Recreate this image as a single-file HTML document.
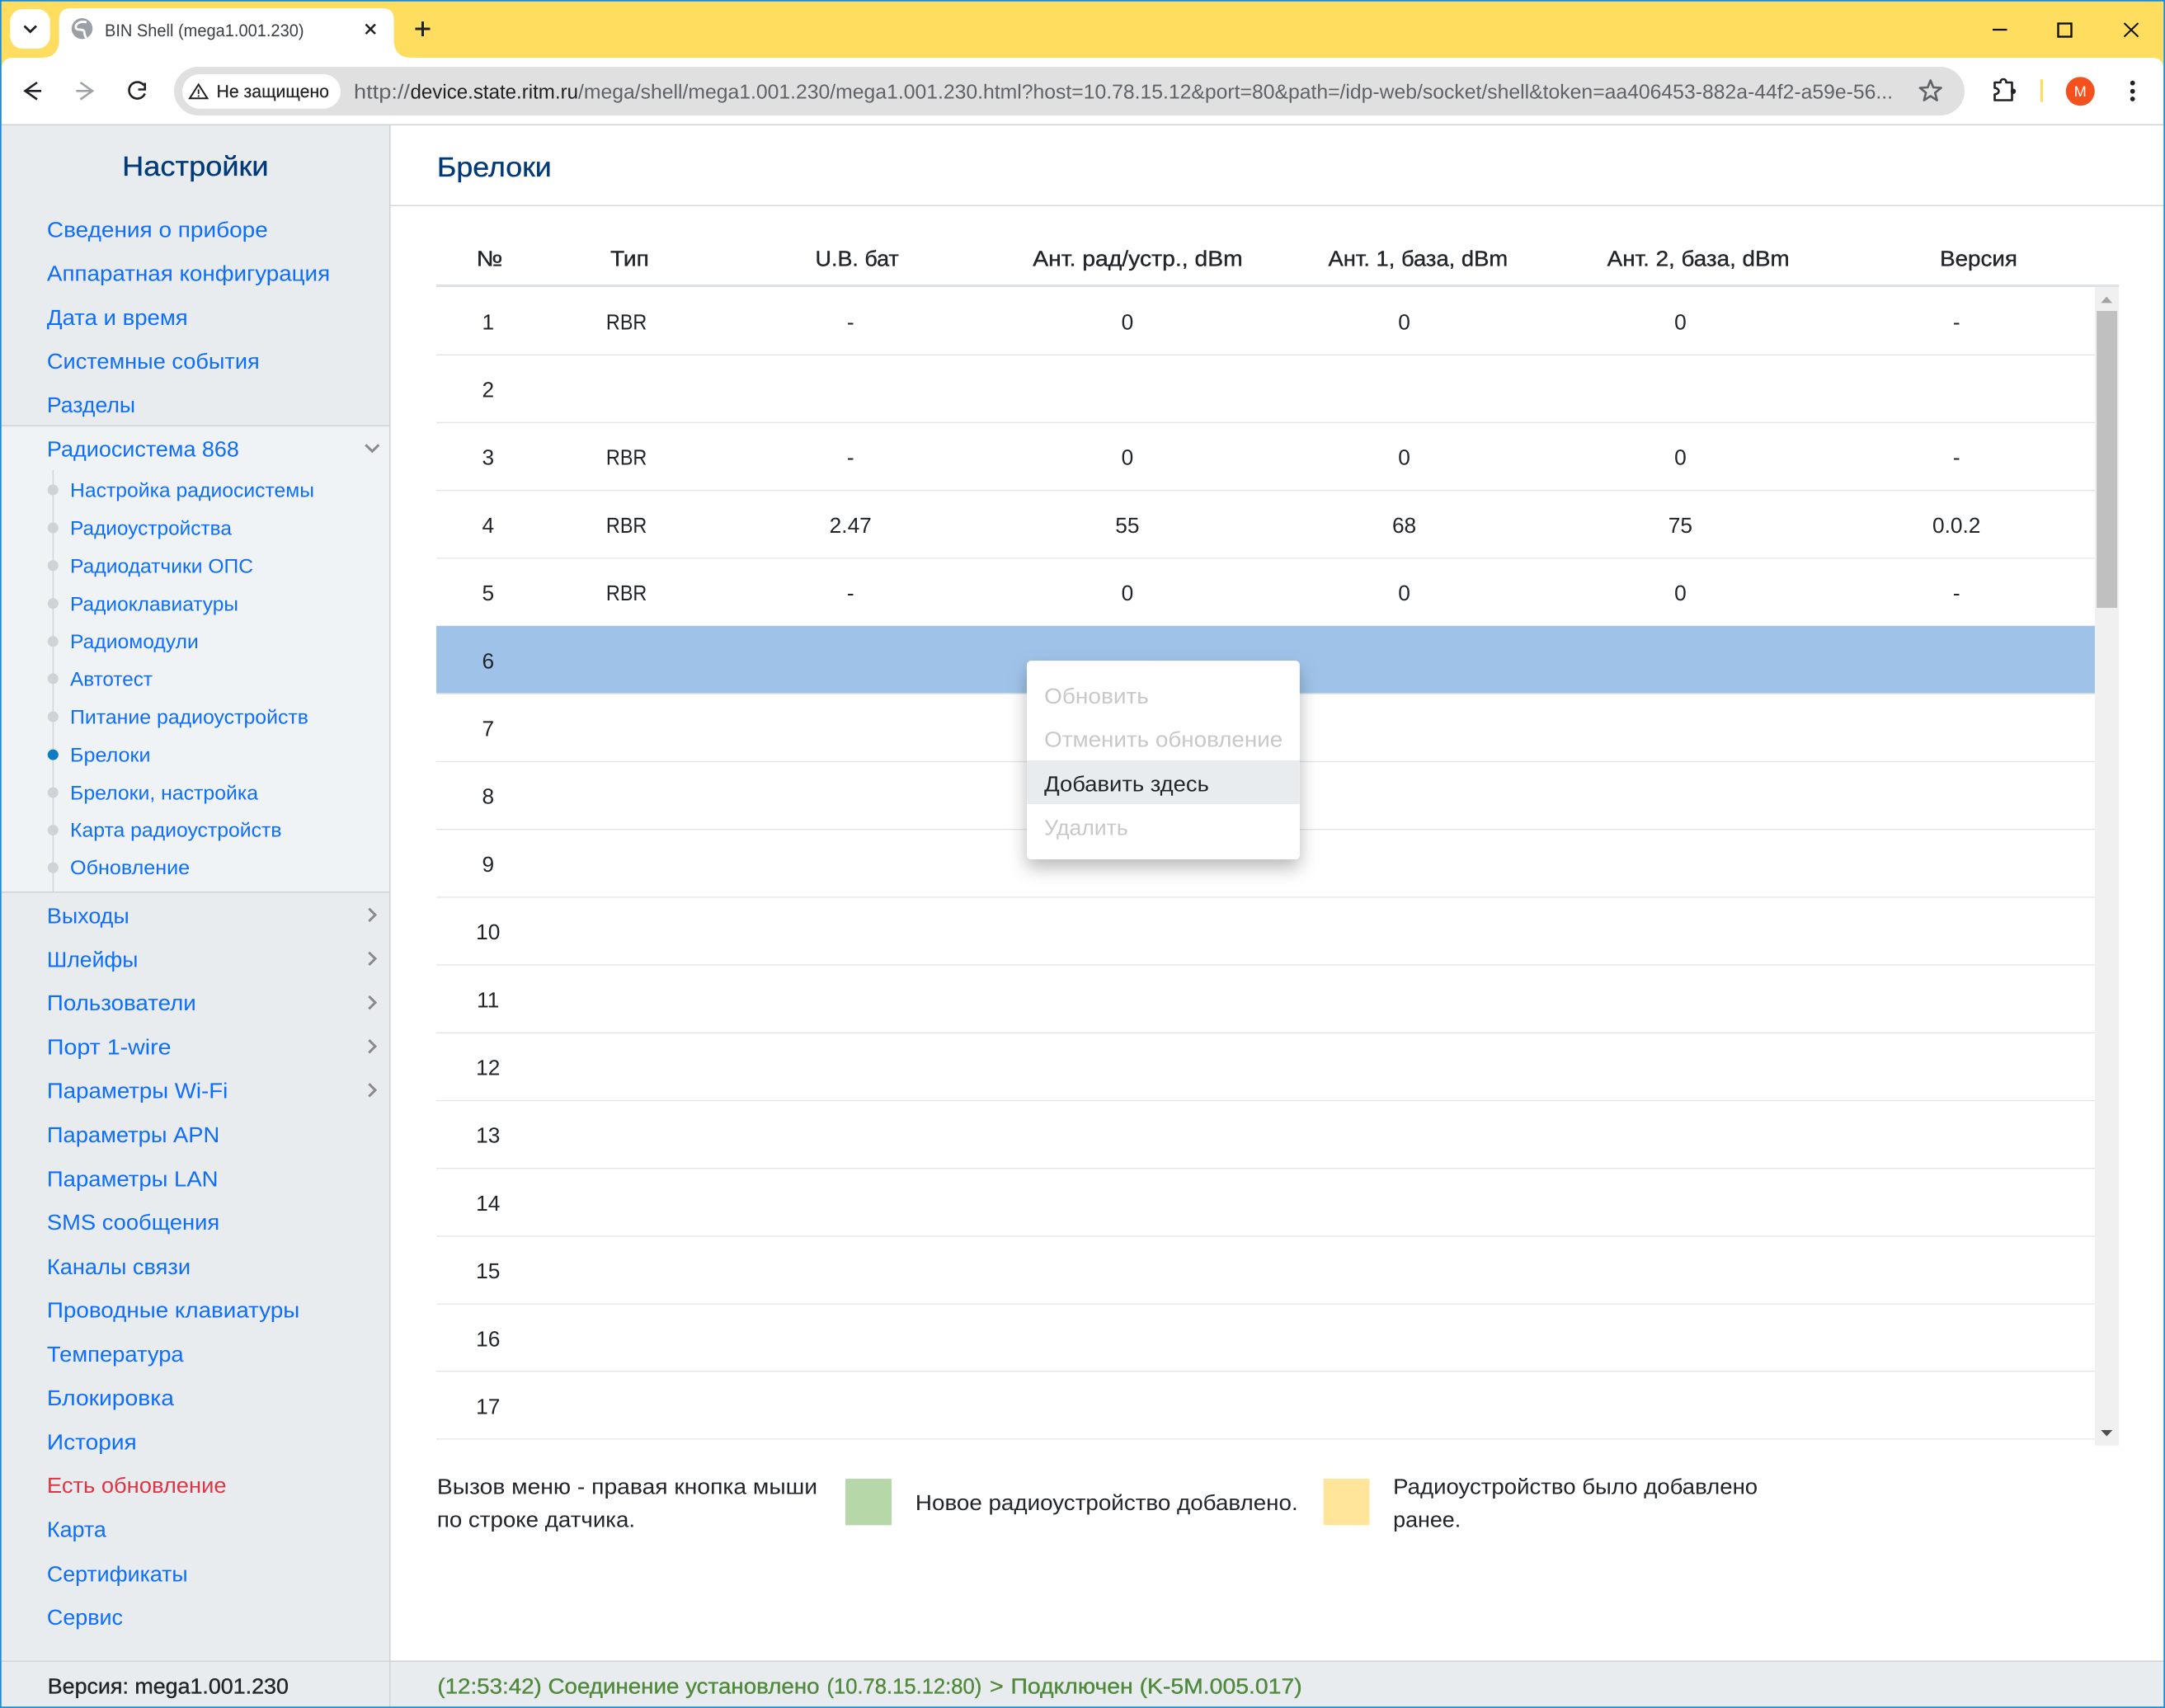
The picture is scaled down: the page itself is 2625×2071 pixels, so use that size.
<!DOCTYPE html>
<html lang="ru">
<head>
<meta charset="utf-8">
<title>BIN Shell (mega1.001.230)</title>
<style>
html,body{margin:0;padding:0;width:2625px;height:2071px;overflow:hidden;background:#fff}
svg{display:block}
text{font-family:"Liberation Sans","Noto Sans CJK SC",sans-serif;text-rendering:geometricPrecision;white-space:pre}
.m{font-size:15.7px;fill:#0d6efd;transform:translateY(-.3px)}
.s{font-size:14.3px;fill:#0d6efd;transform:translateY(-.3px)}
.t{font-size:15.7px;fill:#212529}
.th{font-size:15.7px;fill:#212529;stroke:#212529;stroke-width:.22px}
.g{font-size:15.7px;fill:#4f8a3c;stroke:#4f8a3c;stroke-width:.22px}
.h{font-size:20px;fill:#003a78;stroke:#003a78;stroke-width:.2px}
.c{font-size:15.7px;fill:#212529;text-anchor:middle}
.d{font-size:15.7px;fill:#c8c8c8}
</style>
</head>
<body>
<svg xmlns="http://www.w3.org/2000/svg" width="2625" height="2071" viewBox="0 0 2625 2071">
<defs>
<filter id="sh" x="-30%" y="-30%" width="160%" height="170%">
<feDropShadow dx="0" dy="6" stdDeviation="6.5" flood-color="#000" flood-opacity=".28"/>
</filter>
</defs>

<!-- Browser chrome, real pixels -->
<rect width="2625" height="151" fill="#ffdd5f"/>
<path d="M2 151V84Q2 70 16 70H2609Q2623 70 2623 84V151Z" fill="#fff"/>
<rect x="12.3" y="11" width="48.4" height="48" rx="15" fill="#fff"/>
<path d="M29.5 31.5L36.7 38.5L44 31.5" fill="none" stroke="#202124" stroke-width="2.8"/>
<path d="M50 70Q71.7 70 71.7 48V24Q71.7 10 86 10H464Q477.6 10 477.6 24V48Q477.6 70 499 70Z" fill="#fff"/>
<circle cx="99.5" cy="34.7" r="12.7" fill="#9aa0a6"/>
<path d="M105 27C97 25 91 29 92 33.5C93 38 100 34 102 38C103 41 102 44 105 46" fill="none" stroke="#fff" stroke-width="2.8"/>
<text x="127" y="44" font-size="21" fill="#3c4043" textLength="241.5" lengthAdjust="spacingAndGlyphs">BIN Shell (mega1.001.230)</text>
<path d="M443.5 29.5L455 41M455 29.5L443.5 41" stroke="#202124" stroke-width="2.5" fill="none"/>
<path d="M503.5 35H521.5M512.5 26V44" stroke="#202124" stroke-width="3" fill="none"/>

<path d="M2416 36H2433.5" stroke="#111" stroke-width="2.2"/>
<rect x="2495.5" y="28.5" width="16" height="16" fill="none" stroke="#111" stroke-width="2.4"/>
<path d="M2575.5 28L2592.5 44.5M2592.5 28L2575.5 44.5" stroke="#111" stroke-width="2" fill="none"/>

<path d="M50 110.3H30.5M45 100L30.5 110.3L45 120.5" fill="none" stroke="#202124" stroke-width="2.6"/>
<path d="M92.3 110.3H112M97.5 100L112 110.3L97.5 120.5" fill="none" stroke="#a0a2a5" stroke-width="2.6"/>
<path d="M174.5 103.5A10 10 0 1 0 175.7 113.5" fill="none" stroke="#202124" stroke-width="2.6"/>
<path d="M175.7 100.5V108.5H167.5" fill="none" stroke="#202124" stroke-width="2.6"/>

<rect x="211" y="81" width="2171" height="59" rx="29.5" fill="#e0e0e0"/>
<rect x="221" y="90" width="192" height="41.7" rx="20.8" fill="#fff"/>
<path d="M240.7 102.5L230 119.3H251.4Z" fill="none" stroke="#202124" stroke-width="2"/>
<path d="M240.7 108.5V114M240.7 115.5V117.5" stroke="#202124" stroke-width="1.8"/>
<text x="262.5" y="118" font-size="21.5" fill="#202124" stroke="#202124" stroke-width=".2" textLength="136.5" lengthAdjust="spacingAndGlyphs">Не защищено</text>
<text x="429" y="119.3" font-size="24.5" fill="#5f6368" textLength="68" lengthAdjust="spacingAndGlyphs">http://</text>
<text x="497.5" y="119.3" font-size="24.5" fill="#202124" textLength="203.5" lengthAdjust="spacingAndGlyphs">device.state.ritm.ru</text>
<text x="701" y="119.3" font-size="24.5" fill="#5f6368" textLength="1594" lengthAdjust="spacingAndGlyphs">/mega/shell/mega1.001.230/mega1.001.230.html?host=10.78.15.12&amp;port=80&amp;path=/idp-web/socket/shell&amp;token=aa406453-882a-44f2-a59e-56...</text>
<path d="M2340.7 97.5L2344.1 106L2353.5 106.5L2346.2 112.5L2348.6 121.6L2340.7 116.5L2332.8 121.6L2335.2 112.5L2327.9 106.5L2337.3 106Z" fill="none" stroke="#5f6368" stroke-width="2.6" stroke-linejoin="round"/>
<path d="M2418.5 100H2425.5Q2425.5 96 2429 96Q2432.5 96 2432.5 100H2439.5V121.5H2418.5V114.5Q2423.5 113.5 2423.5 110.5Q2423.5 107.5 2418.5 106.5Z" fill="none" stroke="#202124" stroke-width="2.6" stroke-linejoin="round"/>
<circle cx="2441" cy="110.7" r="3.2" fill="#202124"/>
<rect x="2473.8" y="96" width="3.2" height="27.7" rx="1.5" fill="#ffdc5e"/>
<circle cx="2522.3" cy="110.7" r="17.5" fill="#f4511e"/>
<text x="2522.3" y="117" font-size="18" fill="#fff" text-anchor="middle">M</text>
<circle cx="2585.7" cy="100.7" r="2.9" fill="#202124"/>
<circle cx="2585.7" cy="110.7" r="2.9" fill="#202124"/>
<circle cx="2585.7" cy="120" r="2.9" fill="#202124"/>

<!-- Page panels, real pixels -->
<rect x="0" y="151" width="473" height="1920" fill="#e9ecef"/>
<rect x="0" y="516" width="473" height="566" fill="#f0f3f5"/>
<rect x="0" y="2014" width="2625" height="57" fill="#e9ecef"/>
<rect x="0" y="150.5" width="2625" height="1.5" fill="#cdd1d6"/>
<rect x="472" y="151" width="1.5" height="1920" fill="#cfd3d8"/>
<rect x="473" y="248.5" width="2152" height="1.5" fill="#d5d8dd"/>
<rect x="0" y="515.5" width="473" height="1.5" fill="#cfd3d9"/>
<rect x="0" y="1081" width="473" height="1.5" fill="#cfd3d9"/>
<rect x="0" y="2013.5" width="2625" height="1.5" fill="#cfd3d9"/>

<path d="M443.3 539.3L451.3 547.3L459.3 539.3" fill="none" stroke="#8a8a8a" stroke-width="3"/>
<path d="M447.3 1101.7L455 1109.3L447.3 1117M447.3 1154.8L455 1162.4L447.3 1170.1M447.3 1208L455 1215.6L447.3 1223.3M447.3 1261.1L455 1268.7L447.3 1276.4M447.3 1314.2L455 1321.8L447.3 1329.5" fill="none" stroke="#8a8a8a" stroke-width="3"/>

<rect x="63.7" y="570" width="1.4" height="511" fill="#cfd3d9"/>

<!-- Display-scale group -->
<g transform="scale(1.67411 1.67421)">
<circle cx="38.4" cy="354.8" r="3.9" fill="#ced2d9"/>
<circle cx="38.4" cy="382.3" r="3.9" fill="#ced2d9"/>
<circle cx="38.4" cy="409.6" r="3.9" fill="#ced2d9"/>
<circle cx="38.4" cy="437.1" r="3.9" fill="#ced2d9"/>
<circle cx="38.4" cy="464.6" r="3.9" fill="#ced2d9"/>
<circle cx="38.4" cy="491.5" r="3.9" fill="#ced2d9"/>
<circle cx="38.4" cy="519.1" r="3.9" fill="#ced2d9"/>
<circle cx="38.4" cy="546.6" r="3.9" fill="#0a7cc4"/>
<circle cx="38.4" cy="574" r="3.9" fill="#ced2d9"/>
<circle cx="38.4" cy="601.2" r="3.9" fill="#ced2d9"/>
<circle cx="38.4" cy="628.4" r="3.9" fill="#ced2d9"/>

<text x="88.5" y="127.2" class="h" textLength="106" lengthAdjust="spacingAndGlyphs">Настройки</text>
<text x="316.5" y="127.9" class="h" textLength="83" lengthAdjust="spacingAndGlyphs">Брелоки</text>

<text x="34" y="172" class="m" textLength="160" lengthAdjust="spacingAndGlyphs">Сведения о приборе</text>
<text x="34" y="203.8" class="m" textLength="205" lengthAdjust="spacingAndGlyphs">Аппаратная конфигурация</text>
<text x="34" y="235.5" class="m" textLength="102" lengthAdjust="spacingAndGlyphs">Дата и время</text>
<text x="34" y="267.3" class="m" textLength="154" lengthAdjust="spacingAndGlyphs">Системные события</text>
<text x="34" y="299" class="m" textLength="64" lengthAdjust="spacingAndGlyphs">Разделы</text>
<text x="34" y="331" class="m" textLength="139.2" lengthAdjust="spacingAndGlyphs">Радиосистема 868</text>

<text x="50.8" y="360.3" class="s" textLength="176.8" lengthAdjust="spacingAndGlyphs">Настройка радиосистемы</text>
<text x="50.8" y="387.7" class="s" textLength="117" lengthAdjust="spacingAndGlyphs">Радиоустройства</text>
<text x="50.8" y="415.1" class="s" textLength="132.6" lengthAdjust="spacingAndGlyphs">Радиодатчики ОПС</text>
<text x="50.8" y="442.5" class="s" textLength="121.8" lengthAdjust="spacingAndGlyphs">Радиоклавиатуры</text>
<text x="50.8" y="469.9" class="s" textLength="93" lengthAdjust="spacingAndGlyphs">Радиомодули</text>
<text x="50.8" y="497" class="s" textLength="59.7" lengthAdjust="spacingAndGlyphs">Автотест</text>
<text x="50.8" y="524.5" class="s" textLength="172.6" lengthAdjust="spacingAndGlyphs">Питание радиоустройств</text>
<text x="50.8" y="551.8" class="s" textLength="58.2" lengthAdjust="spacingAndGlyphs">Брелоки</text>
<text x="50.8" y="579.3" class="s" textLength="136.2" lengthAdjust="spacingAndGlyphs">Брелоки, настройка</text>
<text x="50.8" y="606.3" class="s" textLength="153.2" lengthAdjust="spacingAndGlyphs">Карта радиоустройств</text>
<text x="50.8" y="633.5" class="s" textLength="86.7" lengthAdjust="spacingAndGlyphs">Обновление</text>

<text x="34" y="669" class="m" textLength="59.6" lengthAdjust="spacingAndGlyphs">Выходы</text>
<text x="34" y="700.5" class="m" textLength="66" lengthAdjust="spacingAndGlyphs">Шлейфы</text>
<text x="34" y="732" class="m" textLength="108" lengthAdjust="spacingAndGlyphs">Пользователи</text>
<text x="34" y="764" class="m" textLength="90" lengthAdjust="spacingAndGlyphs">Порт 1-wire</text>
<text x="34" y="795.5" class="m" textLength="131" lengthAdjust="spacingAndGlyphs">Параметры Wi-Fi</text>
<text x="34" y="827.5" class="m" textLength="125" lengthAdjust="spacingAndGlyphs">Параметры APN</text>
<text x="34" y="859.5" class="m" textLength="124" lengthAdjust="spacingAndGlyphs">Параметры LAN</text>
<text x="34" y="891" class="m" textLength="125" lengthAdjust="spacingAndGlyphs">SMS сообщения</text>
<text x="34" y="923" class="m" textLength="104" lengthAdjust="spacingAndGlyphs">Каналы связи</text>
<text x="34" y="954.5" class="m" textLength="183" lengthAdjust="spacingAndGlyphs">Проводные клавиатуры</text>
<text x="34" y="986.5" class="m" textLength="99" lengthAdjust="spacingAndGlyphs">Температура</text>
<text x="34" y="1018" class="m" textLength="92" lengthAdjust="spacingAndGlyphs">Блокировка</text>
<text x="34" y="1050" class="m" textLength="65" lengthAdjust="spacingAndGlyphs">История</text>
<text x="34" y="1081.5" class="m" style="fill:#dc3545" textLength="130" lengthAdjust="spacingAndGlyphs">Есть обновление</text>
<text x="34" y="1113.5" class="m" textLength="43" lengthAdjust="spacingAndGlyphs">Карта</text>
<text x="34" y="1145.5" class="m" textLength="102" lengthAdjust="spacingAndGlyphs">Сертификаты</text>
<text x="34" y="1177" class="m" textLength="55" lengthAdjust="spacingAndGlyphs">Сервис</text>

<text x="345" y="192.6" class="th" textLength="19" lengthAdjust="spacingAndGlyphs">№</text>
<text x="442" y="192.6" class="th" textLength="28" lengthAdjust="spacingAndGlyphs">Тип</text>
<text x="590.5" y="192.6" class="th" textLength="60.5" lengthAdjust="spacingAndGlyphs">U.B. бат</text>
<text x="748" y="192.6" class="th" textLength="152" lengthAdjust="spacingAndGlyphs">Ант. рад/устр., dBm</text>
<text x="962" y="192.6" class="th" textLength="130" lengthAdjust="spacingAndGlyphs">Ант. 1, база, dBm</text>
<text x="1164" y="192.6" class="th" textLength="132" lengthAdjust="spacingAndGlyphs">Ант. 2, база, dBm</text>
<text x="1405" y="192.6" class="th" textLength="56" lengthAdjust="spacingAndGlyphs">Версия</text>
<rect x="316" y="206" width="1218.6" height="1.9" fill="#dee2e6"/>

<rect x="1517.2" y="207.9" width="17.4" height="839" fill="#f0f0f0"/>
<rect x="1518.5" y="225.2" width="14.9" height="215" fill="#c0c0c0"/>
<path d="M1521.6 219.4L1525.7 214.8L1529.8 219.4Z" fill="#a3a3a3"/>
<path d="M1521.6 1035.7H1530L1525.8 1040.2Z" fill="#505050"/>

<path d="M316 257H1517.2M316 306.1H1517.2M316 355.2H1517.2M316 404.3H1517.2M316 453.4H1517.2M316 502.5H1517.2M316 551.6H1517.2M316 600.7H1517.2M316 649.8H1517.2M316 698.9H1517.2M316 748H1517.2M316 797.1H1517.2M316 846.2H1517.2M316 895.3H1517.2M316 944.4H1517.2M316 993.1H1517.2M316 1042.2H1517.2" stroke="#e4e5e9" stroke-width=".8" fill="none"/>
<rect x="316" y="453.4" width="1201.2" height="48.6" fill="#9fc3e8"/>

<text x="353.5" y="238.5" class="c">1</text>
<text x="353.5" y="287.6" class="c">2</text>
<text x="353.5" y="336.7" class="c">3</text>
<text x="353.5" y="385.8" class="c">4</text>
<text x="353.5" y="434.9" class="c">5</text>
<text x="353.5" y="484" class="c">6</text>
<text x="353.5" y="533.1" class="c">7</text>
<text x="353.5" y="582.2" class="c">8</text>
<text x="353.5" y="631.3" class="c">9</text>
<text x="353.5" y="680.4" class="c">10</text>
<text x="353.5" y="729.5" class="c">11</text>
<text x="353.5" y="778.6" class="c">12</text>
<text x="353.5" y="827.7" class="c">13</text>
<text x="353.5" y="876.8" class="c">14</text>
<text x="353.5" y="925.9" class="c">15</text>
<text x="353.5" y="975" class="c">16</text>
<text x="353.5" y="1024.1" class="c">17</text>

<text x="439" y="238.5" class="t" textLength="29.5" lengthAdjust="spacingAndGlyphs">RBR</text>
<text x="616" y="238.5" class="c">-</text><text x="816.5" y="238.5" class="c">0</text><text x="1017" y="238.5" class="c">0</text><text x="1217" y="238.5" class="c">0</text><text x="1417" y="238.5" class="c">-</text>
<text x="439" y="336.7" class="t" textLength="29.5" lengthAdjust="spacingAndGlyphs">RBR</text>
<text x="616" y="336.7" class="c">-</text><text x="816.5" y="336.7" class="c">0</text><text x="1017" y="336.7" class="c">0</text><text x="1217" y="336.7" class="c">0</text><text x="1417" y="336.7" class="c">-</text>
<text x="439" y="385.8" class="t" textLength="29.5" lengthAdjust="spacingAndGlyphs">RBR</text>
<text x="616" y="385.8" class="c">2.47</text><text x="816.5" y="385.8" class="c">55</text><text x="1017" y="385.8" class="c">68</text><text x="1217" y="385.8" class="c">75</text><text x="1417" y="385.8" class="c">0.0.2</text>
<text x="439" y="434.9" class="t" textLength="29.5" lengthAdjust="spacingAndGlyphs">RBR</text>
<text x="616" y="434.9" class="c">-</text><text x="816.5" y="434.9" class="c">0</text><text x="1017" y="434.9" class="c">0</text><text x="1217" y="434.9" class="c">0</text><text x="1417" y="434.9" class="c">-</text>

<rect x="743.7" y="478.5" width="197.6" height="143.9" rx="3.2" fill="#fff" filter="url(#sh)"/>
<rect x="743.7" y="550.7" width="197.6" height="31.7" fill="#e9ecef"/>
<text x="756.3" y="509.4" class="d" textLength="75.7" lengthAdjust="spacingAndGlyphs">Обновить</text>
<text x="756.3" y="540.8" class="d" textLength="172.7" lengthAdjust="spacingAndGlyphs">Отменить обновление</text>
<text x="756.3" y="573.1" class="t" textLength="119.3" lengthAdjust="spacingAndGlyphs">Добавить здесь</text>
<text x="756.3" y="604.8" class="d" textLength="60.7" lengthAdjust="spacingAndGlyphs">Удалить</text>

<text x="316.5" y="1082" class="t" textLength="275.5" lengthAdjust="spacingAndGlyphs">Вызов меню - правая кнопка мыши</text>
<text x="316.5" y="1105.8" class="t" textLength="143.5" lengthAdjust="spacingAndGlyphs">по строке датчика.</text>
<rect x="612.3" y="1071" width="33.4" height="33.6" fill="#b6d7a8"/>
<text x="663" y="1093.8" class="t" textLength="277" lengthAdjust="spacingAndGlyphs">Новое радиоустройство добавлено.</text>
<rect x="958.5" y="1071" width="33.4" height="33.6" fill="#ffe599"/>
<text x="1009" y="1082" class="t" textLength="264" lengthAdjust="spacingAndGlyphs">Радиоустройство было добавлено</text>
<text x="1009" y="1105.8" class="t" textLength="49" lengthAdjust="spacingAndGlyphs">ранее.</text>

<text x="34.5" y="1226.5" class="th" textLength="174.5" lengthAdjust="spacingAndGlyphs">Версия: mega1.001.230</text>
<text x="316.8" y="1226.5" class="g" textLength="276.7" lengthAdjust="spacingAndGlyphs">(12:53:42) Соединение установлено</text>
<text x="598.8" y="1226.5" class="g" textLength="112.2" lengthAdjust="spacingAndGlyphs">(10.78.15.12:80)</text>
<text x="716.8" y="1226.5" class="g" textLength="10" lengthAdjust="spacingAndGlyphs">&gt;</text>
<text x="732" y="1226.5" class="g" textLength="211" lengthAdjust="spacingAndGlyphs">Подключен (K-5M.005.017)</text>
</g>

<!-- Window border -->
<rect x="0" y="0" width="2625" height="1.7" fill="#1a8ae0"/>
<rect x="0" y="2069.3" width="2625" height="1.7" fill="#1a8ae0"/>
<rect x="0" y="0" width="1.7" height="2071" fill="#1a8ae0"/>
<rect x="2623.3" y="0" width="1.7" height="2071" fill="#1a8ae0"/>
</svg>
</body>
</html>
